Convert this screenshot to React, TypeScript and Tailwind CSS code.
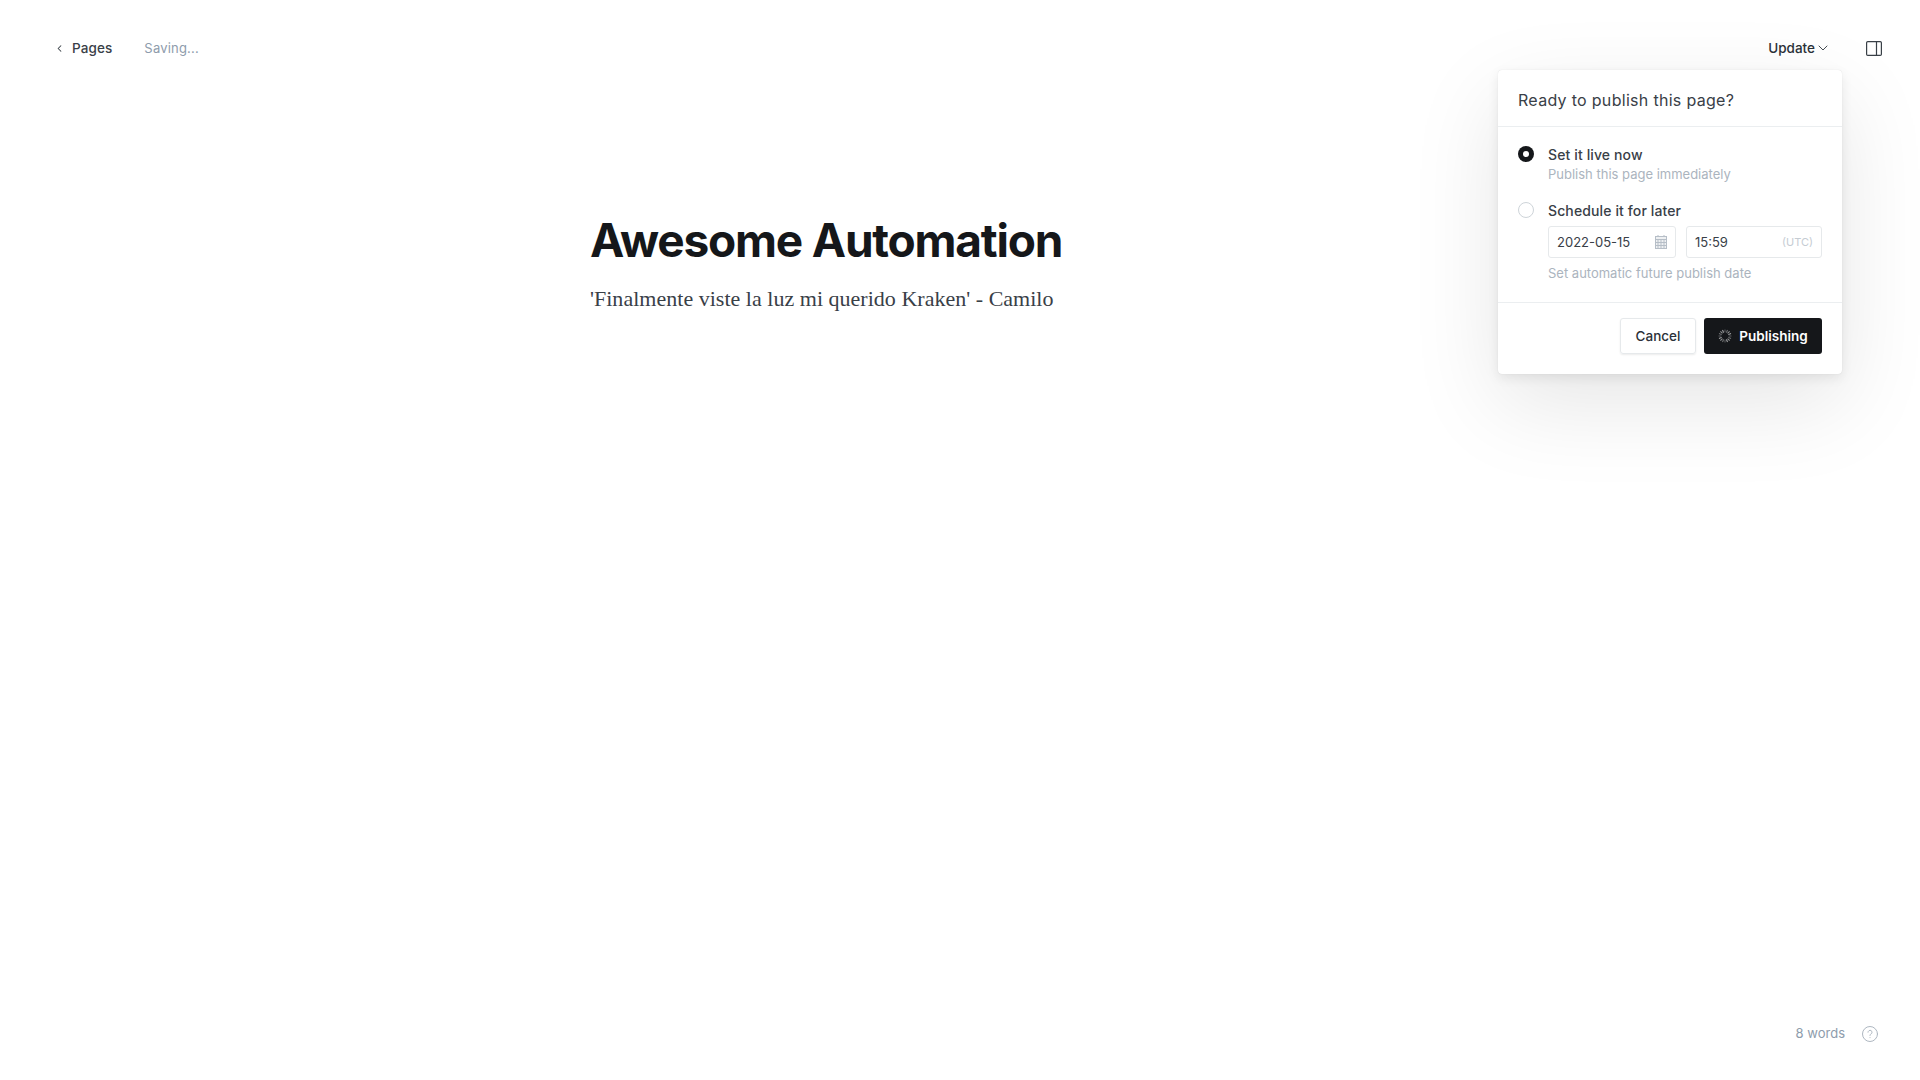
import { ChevronDown, ChevronLeft } from 'lucide-react'

function Spinner() {
  const ticks = Array.from({ length: 16 }, (_, i) => i)
  return (
    <svg width="14" height="14" viewBox="0 0 14 14" fill="none">
      {ticks.map((i) => (
        <line key={i} x1="7" y1="0.5" x2="7" y2="3.4" stroke="#fff" strokeWidth="1" strokeOpacity={0.3 + (i % 4) * 0.12} transform={`rotate(${i * 22.5} 7 7)`} />
      ))}
    </svg>
  )
}

function CalendarIcon() {
  return (
    <svg width="12" height="14" viewBox="0 0 12 14" fill="none" stroke="#b6bec7" strokeWidth="1">
      <rect x="0.5" y="1.5" width="11" height="12" fill="#eef0f2" />
      <path d="M0.5 4.5h11M3 0v2M9 0v2M3 4.5v9M6 4.5v9M9 4.5v9M0.5 7.5h11M0.5 10.5h11" />
    </svg>
  )
}

export default function App() {
  return (
    <div className="flex h-[1080px] w-[1920px] flex-col overflow-hidden bg-white font-['Inter',sans-serif] text-[#15171a]">
      {/* Top bar */}
      <header className="flex h-[96px] shrink-0 items-center justify-between pl-[54px] pr-[38px]">
        <div className="flex items-center">
          <div className="flex items-center gap-[7px] text-[13.5px] font-medium tracking-[0.1px] text-[#394047]">
            <ChevronLeft className="h-[11px] w-[11px]" strokeWidth={2.2} />
            <span>Pages</span>
          </div>
          <span className="ml-[32px] pt-[1px] text-[13px] tracking-[0.2px] text-[#8e9cac]">Saving...</span>
        </div>
        <div className="flex items-center gap-[35px]">
          <div className="flex items-center text-[13.5px] font-medium text-[#2b3138]">
            <span>Update</span>
            <ChevronDown className="h-[16px] w-[16px] text-[#394047]" strokeWidth={1.4} />
          </div>
          <svg width="16" height="15" viewBox="0 0 16 15" fill="none" stroke="#394047" strokeWidth="1.2">
            <rect x="0.6" y="0.6" width="14.8" height="13.8" rx="1.2" />
            <path d="M10.5 0.6v13.8" />
          </svg>
        </div>
      </header>

      <div className="relative flex-1">
        {/* Editor */}
        <main className="ml-[590px] w-[740px] pt-[115px]">
          <h1 className="text-[46px] font-bold leading-[58px] tracking-[-1.2px] text-[#15171a]">Awesome Automation</h1>
          <p className="mt-[14px] font-['Liberation_Serif',serif] text-[22px] leading-[32px] tracking-[0.02px] text-[#394047]">
            'Finalmente viste la luz mi querido Kraken' - Camilo
          </p>
        </main>

        {/* Publish menu */}
        <div className="absolute left-[1498px] top-[-26px] w-[344px] rounded-[4px] bg-white shadow-[0_0_1px_rgba(0,0,0,0.15),0_4px_12px_rgba(0,0,0,0.08),0_30px_90px_rgba(0,0,0,0.1)]">
          <div className="flex h-[57px] items-center border-b border-[#ebeef0] px-[20px] pt-[4px] text-[16px] tracking-[0.3px] text-[#394047]">
            Ready to publish this page?
          </div>
          <div className="flex flex-col px-[20px] pt-[19px]">
            <div className="flex gap-[14px]">
              <span className="flex h-[16px] w-[16px] shrink-0 items-center justify-center rounded-full bg-[#15171a]">
                <span className="h-[6px] w-[6px] rounded-full bg-white" />
              </span>
              <div className="flex flex-col">
                <span className="text-[14px] font-medium leading-[18px] tracking-[0.12px] text-[#394047]">Set it live now</span>
                <span className="mt-[1px] text-[13px] leading-[18px] text-[#abb4be]">Publish this page immediately</span>
              </div>
            </div>
            <div className="mt-[19px] flex gap-[14px]">
              <span className="h-[16px] w-[16px] shrink-0 rounded-full border border-[#ced4d9]" />
              <div className="flex flex-1 flex-col">
                <span className="text-[14px] font-medium leading-[18px] tracking-[0.12px] text-[#394047]">Schedule it for later</span>
                <div className="mt-[6px] flex gap-[10px]">
                  <div className="flex h-[32px] w-[128px] items-center justify-between rounded-[3px] border border-[#e6e9eb] pl-[8px] pr-[8px] text-[13px] text-[#394047]">
                    <span className="pt-[1px]">2022-05-15</span>
                    <CalendarIcon />
                  </div>
                  <div className="flex h-[32px] w-[136px] items-center justify-between rounded-[3px] border border-[#e6e9eb] pl-[8px] pr-[8px] text-[13px] text-[#394047]">
                    <span className="pt-[1px]">15:59</span>
                    <span className="text-[11px] text-[#c5ccd3]">(UTC)</span>
                  </div>
                </div>
                <span className="mt-[6px] text-[13px] leading-[18px] text-[#abb4be]">Set automatic future publish date</span>
              </div>
            </div>
          </div>
          <div className="mt-[20px] flex justify-end gap-[8px] border-t border-[#ebeef0] px-[20px] pb-[20px] pt-[15px]">
            <button className="h-[36px] w-[76px] rounded-[3px] border border-[#e6e9eb] text-[13.5px] font-medium text-[#2b3138] shadow-[0_1px_2px_rgba(0,0,0,0.08)]">Cancel</button>
            <button className="flex h-[36px] w-[118px] items-center justify-center gap-[7px] rounded-[3px] bg-[#15171a] text-[13.5px] font-semibold text-white">
              <Spinner />
              Publishing
            </button>
          </div>
        </div>
      </div>

      {/* Footer */}
      <footer className="flex h-[92px] shrink-0 items-center justify-end gap-[17px] pr-[42px] text-[13px] text-[#8e9cac]">
        <span>8 words</span>
        <svg width="16" height="16" viewBox="0 0 16 16" fill="none" stroke="#aeb7c1" strokeWidth="1" strokeLinecap="round">
          <circle cx="8" cy="8" r="7.5" />
          <path d="M6 6.2a2 2 0 1 1 3 1.8c-.7.4-1 .7-1 1.5M8 11.6v.1" />
        </svg>
      </footer>
    </div>
  )
}
